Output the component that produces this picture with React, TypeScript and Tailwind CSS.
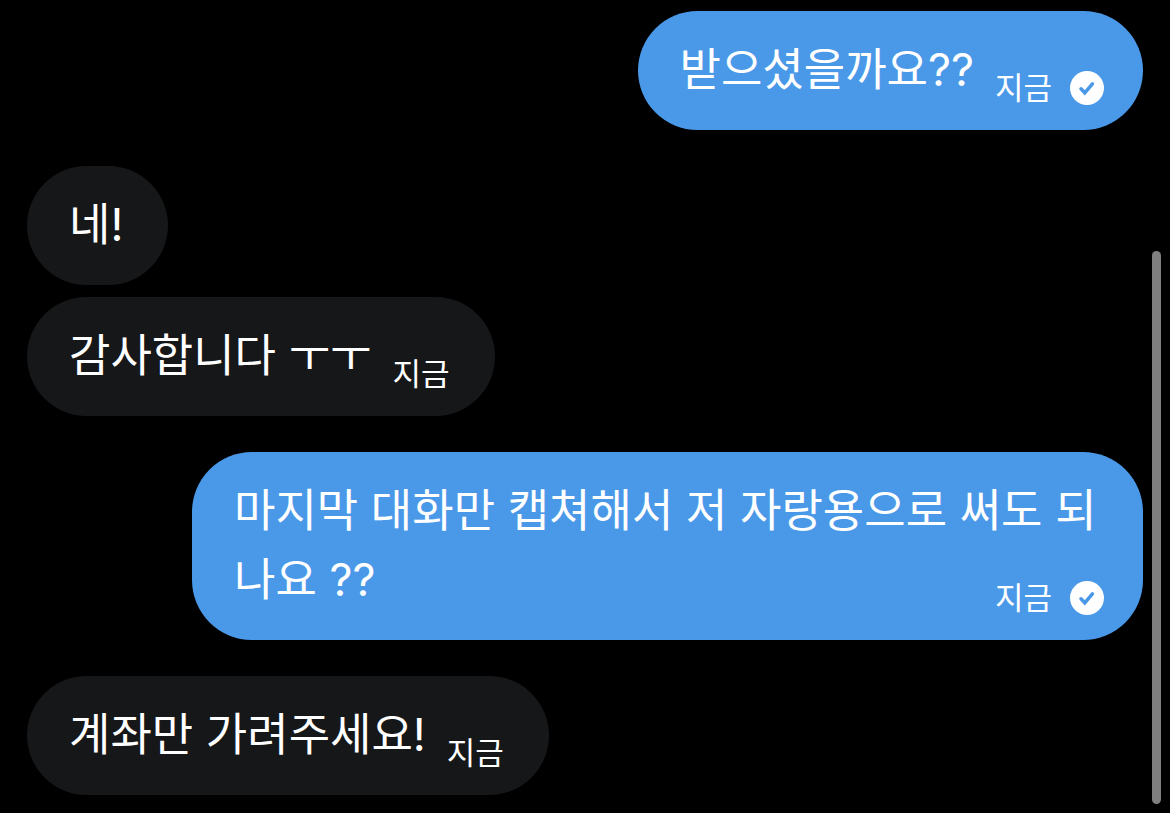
type Message = {
  id: number;
  text: string;
  mine?: boolean;
  time?: string;
  first?: boolean;
};

const messages: Message[] = [
  { id: 1, text: "받으셨을까요??", mine: true, time: "지금", first: true },
  { id: 2, text: "네!", first: true },
  { id: 3, text: "감사합니다 ㅜㅜ", time: "지금" },
  { id: 4, text: "마지막 대화만 캡쳐해서 저 자랑용으로 써도 되나요 ??", mine: true, time: "지금", first: true },
  { id: 5, text: "계좌만 가려주세요!", time: "지금", first: true },
];

const SentBadge = () => (
  <svg viewBox="0 0 34 34" className="size-[34px]" role="img" aria-label="전송됨">
    <circle cx="17" cy="17" r="17" fill="#fff" />
    <path
      d="M11 17.8 L14.8 21.8 L22.4 12.8"
      fill="none"
      stroke="#4a99e9"
      strokeWidth="3.5"
      strokeLinecap="round"
    />
  </svg>
);

function Bubble({ message }: { message: Message }) {
  const { text, mine, time, first } = message;

  return (
    <li className={`flex ${mine ? "justify-end pl-[165px]" : "justify-start"} ${first ? "mt-9" : "mt-3"} first:mt-0`}>
      <div
        className={`rounded-[60px] pt-6 pb-[26px] pl-[42px] text-white ${
          mine ? "bg-[#4a99e9] pr-[39px]" : "bg-[#161719] pr-[45px]"
        }`}
      >
        <div className="flow-root text-[45px] leading-[69px] break-all">
          <span>{text}</span>
          {/* the time sits at the end of the last line */}
          {time && (
            <div className="float-right mt-9 -mb-1 ml-[21px] flex items-center gap-[18px] text-[31px] leading-[34px]">
              <time>{time}</time>
              {mine && <SentBadge />}
            </div>
          )}
        </div>
      </div>
    </li>
  );
}

export default function App() {
  return (
    <main className="relative min-h-screen bg-black font-['Inter','Noto_Sans_CJK_KR',sans-serif]">
      <ul className="flex flex-col px-[27px] pt-[11px] pb-[18px]">
        {messages.map((message) => (
          <Bubble key={message.id} message={message} />
        ))}
      </ul>
      <div className="absolute top-[251px] right-[9px] bottom-[9px] w-[9px] rounded-full bg-[#7f7f7f]" />
    </main>
  );
}
